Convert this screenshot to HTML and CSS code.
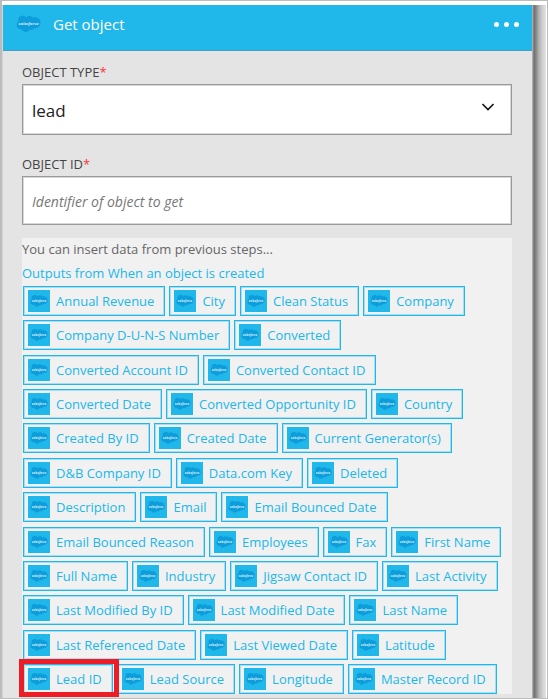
FILE: index.html
```
<!DOCTYPE html>
<html lang="en">
<head>
<meta charset="utf-8">
<title>Get object</title>
<link rel="stylesheet" href="styles.css">
</head>
<body>
<svg class="defs" aria-hidden="true">
  <symbol id="cloud" viewBox="0 0 24 17">
    <path fill="#0d9ddb" d="M10 2.2C11.500.3 14.800.3 16.400 2.500C19.800 1 23.500 3.400 23.500 7.300C23.500 11 20.400 13 17.600 12.500C16.500 14.400 14.300 14.700 12.800 13.900C11.200 17 6.900 17 5.500 13.600C2.800 14.100.6 12 .6 9.500C.6 7.900 1.300 6.600 2.500 5.900C1.300 2.600 3.500.5 6 .5C7.700.5 9.200 1 10 2.200Z"/>
    <text x="12" y="9.500" text-anchor="middle" class="cloud-word">salesforce</text>
  </symbol>
</svg>
<div class="frame">
<main class="card">
  <header class="head">
    <svg class="head-logo" aria-hidden="true"><use href="#cloud"/></svg>
    <h1>Get object</h1>
    <button class="more" type="button" aria-label="More"><i></i><i></i><i></i></button>
  </header>
  <form class="form">
    <label for="type">OBJECT TYPE<b>*</b></label>
    <div class="select">
      <select id="type"><option>lead</option></select>
      <svg class="chevron" viewBox="0 0 14 8" aria-hidden="true"><path d="M1.500 1L7 6.500L12.500 1" fill="none" stroke="#111" stroke-width="1.600"/></svg>
    </div>
    <label for="oid">OBJECT ID<b>*</b></label>
    <input id="oid" type="text" placeholder="Identifier of object to get">
    <section class="data">
      <p class="hint">You can insert data from previous steps...</p>
      <h2>Outputs from When an object is created</h2>
      <div class="rows" id="rows"></div>
    </section>
  </form>
</main>
</div>
<script src="script.js"></script>
</body>
</html>
```
FILE: styles.css
```
* { box-sizing: border-box; }
body {
  margin: 0;
  font-family: "Open Sans", "Noto Sans", sans-serif;
  font-size: 13px;
  color: #444;
  background: #fff;
}
.defs { display: none; }
.cloud-word { font-size: 4px; font-weight: 700; font-style: italic; fill: #c5e9f8; }
.frame {
  min-height: 100vh;
  display: flex;
  padding-top: 4px;
  border: 1px solid #bcbcbc;
  border-left-width: 2px;
}
.card {
  flex: 1;
  display: flex;
  flex-direction: column;
  margin-right: 14px;
  background: #e4e4e4;
  border-left: 1px solid #d4d4d4;
  border-right: 1px solid #c6c6c6;
  position: relative;
}
.card::after {
  content: "";
  position: absolute;
  top: 0;
  bottom: 0;
  left: 100%;
  width: 14px;
  background: linear-gradient(to right, #c0c0c0 0, #707074 2px, #858585 4px, #b4b4b4 7px, #d4d4d4 11px, #e2e2e2 14px);
}
.head {
  display: flex;
  align-items: center;
  height: 46px;
  padding: 0 13px 7px 13px;
  background: #20b7eb;
  border-bottom: 1px solid #479fc0;
}
.head-logo { width: 25px; height: 18px; }
h1 { margin: 0 0 0 12px; font-size: 15px; line-height: 20px; font-weight: 400; color: #fff; }
.more { margin-left: auto; padding: 0; border: 0; background: none; display: flex; gap: 5px; }
.more i { width: 5px; height: 5px; border-radius: 50%; background: #fff; }
.form { flex: 1; display: flex; flex-direction: column; padding: 12px 20px 4px 19px; }
label { line-height: 18px; padding-bottom: 3px; }
label b { color: #f33; font-weight: 400; }
.select { position: relative; display: flex; margin-bottom: 20px; }
select, input {
  appearance: none;
  width: 100%;
  border: 1px solid #999;
  border-radius: 0;
  background: #fff;
  box-shadow: inset 0 0 0 1px #d8d8d8;
  font-family: inherit;
  padding: 0 9px;
  outline: 0;
}
select { height: 51px; padding-top: 2px; font-size: 17px; color: #222; }
input { height: 49px; padding-top: 2px; font-size: 14px; }
input::placeholder { color: #777; font-style: italic; opacity: 1; }
.chevron { position: absolute; right: 17px; top: 19px; width: 14px; height: 8px; }
.data { flex: 1; display: flex; flex-direction: column; margin-top: 13px; background: #f1f1f1; }
.hint { margin: 0; line-height: 23px; color: #666; }
h2 { margin: 0; font-size: 13px; line-height: 25px; font-weight: 400; color: #20b7eb; }
.rows { flex: 1; display: flex; flex-direction: column; justify-content: space-between; padding-left: 1px; }
.row { display: flex; gap: 4px; }
.chip {
  position: relative;
  display: flex;
  align-items: center;
  gap: 6px;
  height: 30px;
  padding: 0 10px 0 4px;
  border: 1px solid #20b7eb;
  box-shadow: inset 0 0 0 1px #a5def4;
  background: none;
  font: inherit;
  color: #20b7eb;
  white-space: nowrap;
}
.chip svg { flex: none; width: 22px; height: 22px; padding: 4px 2px; background: #20b7eb; }
.marked::after { content: ""; position: absolute; inset: -6px -7px -4px -5px; border: 5px solid #ee1c25; z-index: 1; }
```
FILE: script.js
```
const rows = [
  ["Annual Revenue", "City", "Clean Status", "Company"],
  ["Company D-U-N-S Number", "Converted"],
  ["Converted Account ID", "Converted Contact ID"],
  ["Converted Date", "Converted Opportunity ID", "Country"],
  ["Created By ID", "Created Date", "Current Generator(s)"],
  ["D&B Company ID", "Data.com Key", "Deleted"],
  ["Description", "Email", "Email Bounced Date"],
  ["Email Bounced Reason", "Employees", "Fax", "First Name"],
  ["Full Name", "Industry", "Jigsaw Contact ID", "Last Activity"],
  ["Last Modified By ID", "Last Modified Date", "Last Name"],
  ["Last Referenced Date", "Last Viewed Date", "Latitude"],
  ["Lead ID", "Lead Source", "Longitude", "Master Record ID"]
];
const icon = '<svg aria-hidden="true"><use href="#cloud"/></svg>';
for (const names of rows) {
  const row = document.createElement("div");
  row.className = "row";
  for (const name of names) {
    const chip = document.createElement("button");
    chip.type = "button";
    chip.className = name === "Lead ID" ? "chip marked" : "chip";
    chip.innerHTML = icon;
    const text = document.createElement("span");
    text.textContent = name;
    chip.append(text);
    row.append(chip);
  }
  document.getElementById("rows").append(row);
}
```
